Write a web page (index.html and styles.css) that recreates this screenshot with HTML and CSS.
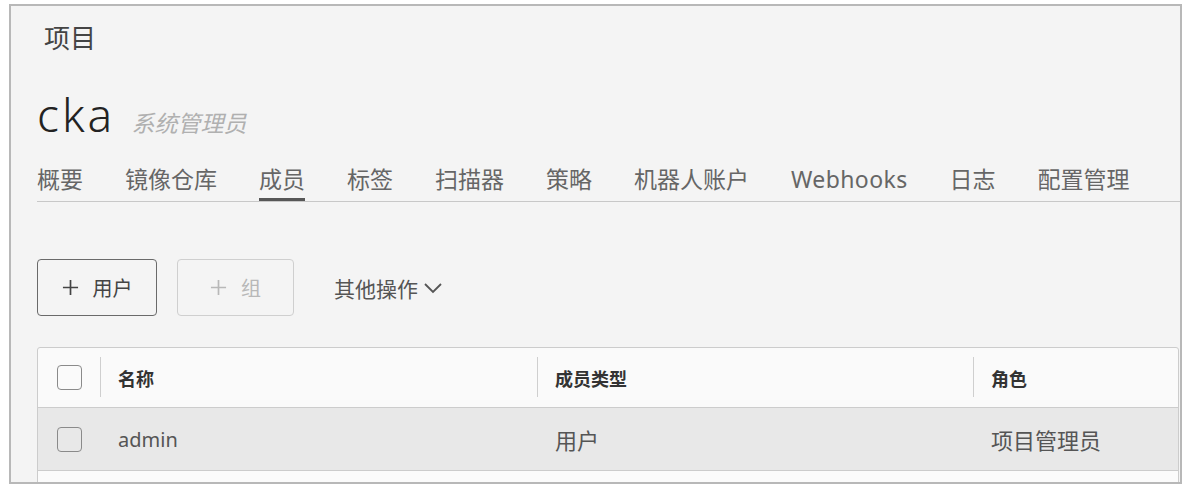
FILE: index.html
```html
<!DOCTYPE html>
<html lang="zh">
<head>
  <meta charset="UTF-8" />
  <title>cka - 成员</title>
  <link rel="stylesheet" href="styles.css">
</head>
<body>
  <div class="frame">
    <div class="crumb">项目</div>
    <div class="title">
      <span class="name">cka</span>
      <span class="role">系统管理员</span>
    </div>

    <nav class="tabs">
      <a class="tab">概要</a>
      <a class="tab">镜像仓库</a>
      <a class="tab active">成员</a>
      <a class="tab">标签</a>
      <a class="tab">扫描器</a>
      <a class="tab">策略</a>
      <a class="tab">机器人账户</a>
      <a class="tab latin">Webhooks</a>
      <a class="tab">日志</a>
      <a class="tab">配置管理</a>
    </nav>

    <div class="actions">
      <button class="btn">
        <svg class="plus" viewBox="0 0 18 18"><path d="M9 1v16M1 9h16" /></svg>
        用户
      </button>
      <button class="btn disabled">
        <svg class="plus" viewBox="0 0 18 18"><path d="M9 1v16M1 9h16" /></svg>
        组
      </button>
      <span class="more">
        其他操作
        <svg class="chevron" viewBox="0 0 18 12"><path d="M1 2l8 8 8-8" /></svg>
      </span>
    </div>

    <div class="grid">
      <div class="row head">
        <div class="cell check"><span class="box"></span></div>
        <div class="cell">名称</div>
        <div class="cell">成员类型</div>
        <div class="cell">角色</div>
      </div>
      <div class="row body">
        <div class="cell check"><span class="box"></span></div>
        <div class="cell name-cell">admin</div>
        <div class="cell">用户</div>
        <div class="cell">项目管理员</div>
      </div>
      <div class="row tail"></div>
    </div>
  </div>
</body>
</html>
```

FILE: styles.css
```css
body {
  margin: 0;
  background: #fff;
  font-family: "Noto Sans", "Noto Sans CJK SC", sans-serif;
  color: #555;
}

.frame {
  margin: 4px 0 0 9px;
  width: 1143px;
  height: 476px;
  border: 2px solid #b8b8b8;
  background: #f4f4f4;
  overflow: hidden;
  padding-left: 26px;
}

.crumb {
  padding-top: 17px;
  font-size: 26px;
  line-height: 30px;
  color: #444;
  padding-left: 7px;
}

.title {
  margin-top: 33px;
  height: 56px;
  line-height: 56px;
  white-space: nowrap;
}

.title .name {
  font-size: 46px;
  font-weight: 300;
  color: #222;
  letter-spacing: 3px;
}

.title .role {
  margin-left: 12px;
  font-size: 23px;
  font-style: italic;
  color: #b0b0b0;
}

.tabs {
  margin-top: 23px;
  display: flex;
  gap: 42px;
  border-bottom: 1px solid #c8c8c8;
}

.tab {
  font-size: 23px;
  line-height: 28px;
  padding-bottom: 5px;
  border-bottom: 3px solid transparent;
  color: #666;
  white-space: nowrap;
}

.tab.latin {
  letter-spacing: 0.4px;
}

.tab.active {
  border-bottom-color: #575757;
}

.actions {
  margin-top: 57px;
  display: flex;
  align-items: center;
  gap: 20px;
  height: 57px;
}

.btn {
  height: 57px;
  width: 120px;
  border: 1px solid #6a6a6a;
  border-radius: 4px;
  background: transparent;
  font-family: inherit;
  font-size: 20px;
  color: #444;
  display: flex;
  align-items: center;
  justify-content: center;
  gap: 14px;
  padding: 0;
}

.btn.disabled {
  width: 117px;
  border-color: #cfcfcf;
  color: #b8b8b8;
}

.plus {
  width: 17px;
  height: 17px;
  stroke: currentColor;
  stroke-width: 1.8;
  fill: none;
}

.more {
  margin-left: 20px;
  font-size: 21px;
  color: #555;
  display: flex;
  align-items: center;
  gap: 6px;
}

.chevron {
  width: 18px;
  height: 12px;
  stroke: #555;
  stroke-width: 1.8;
  fill: none;
}

.grid {
  margin-top: 31px;
  margin-right: 1px;
  border: 1px solid #cccccc;
  border-radius: 3px 3px 0 0;
  background: #fafafa;
}

.row {
  display: grid;
  grid-template-columns: 62px 437px 436px 1fr;
  align-items: center;
}

.row.head {
  height: 59px;
  font-size: 18px;
  font-weight: 700;
  color: #333;
}

.row.head .cell {
  position: relative;
}

.row.head .cell + .cell::before {
  content: "";
  position: absolute;
  left: 0;
  top: 50%;
  height: 40px;
  margin-top: -21px;
  border-left: 1px solid #cfcfcf;
}

.cell {
  padding-left: 18px;
  white-space: nowrap;
}

.cell.check {
  padding-left: 19px;
  display: flex;
  align-items: center;
}

.box {
  width: 25px;
  height: 25px;
  border: 1.5px solid #8a8a8a;
  border-radius: 4px;
  box-sizing: border-box;
  display: inline-block;
}

.row.body {
  height: 62px;
  border-top: 1px solid #cccccc;
  border-bottom: 1px solid #cccccc;
  background: #e8e8e8;
  font-size: 22px;
  color: #555;
}

.row.body .name-cell {
  font-size: 20px;
}

.row.tail {
  height: 30px;
  background: #fbfbfb;
}
```
